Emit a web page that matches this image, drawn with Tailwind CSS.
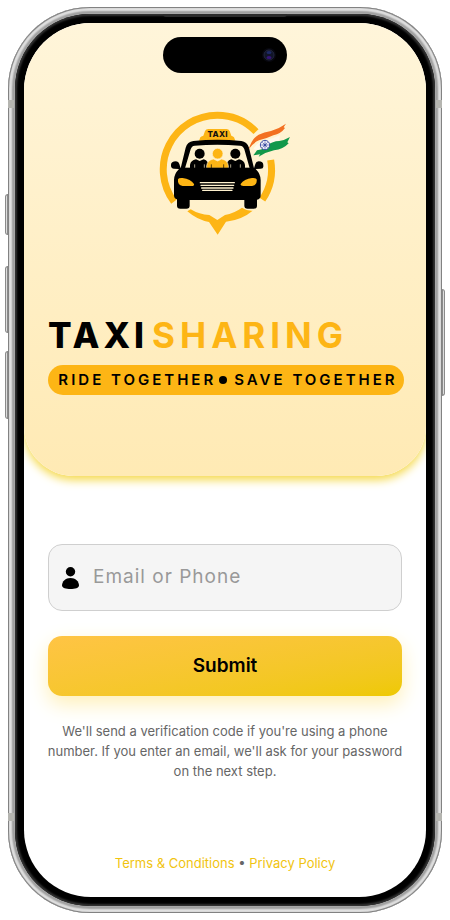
<!doctype html>
<html lang="en">
<head>
  <meta charset="UTF-8">
  <meta name="viewport" content="width=device-width, initial-scale=1.0">
  <title>Taxi Sharing</title>
  <script src="https://cdn.jsdelivr.net/npm/@tailwindcss/browser@4"></script>
</head>
<body class="bg-white font-['Inter',sans-serif]">
  <div class="min-h-screen flex px-2 py-[7px]">

    <!-- Phone frame -->
    <div class="relative flex flex-1 rounded-[82px] bg-[#a9a9a9] p-[7px] shadow-[inset_0_0_1px_1px_#777,inset_0_0_2px_4px_#e4e4e4,inset_0_0_1px_6px_#999]">
      <span class="absolute -left-[3px] top-[187px] h-[41px] w-[3px] rounded-l-sm border border-[#8a8a8a] bg-[#ddd]"></span>
      <span class="absolute -left-[3px] top-[259px] h-[67px] w-[3px] rounded-l-sm border border-[#8a8a8a] bg-[#ddd]"></span>
      <span class="absolute -left-[3px] top-[344px] h-[68px] w-[3px] rounded-l-sm border border-[#8a8a8a] bg-[#ddd]"></span>
      <span class="absolute -right-[3px] top-[282px] h-[107px] w-[3px] rounded-r-sm border border-[#8a8a8a] bg-[#ddd]"></span>
      <span class="absolute left-0 top-[93px] h-2 w-[6px] bg-[#b5b5b0]"></span>
      <span class="absolute right-0 top-[93px] h-2 w-[6px] bg-[#b5b5b0]"></span>
      <span class="absolute left-0 bottom-[92px] h-2 w-[6px] bg-[#b5b5b0]"></span>
      <span class="absolute right-0 bottom-[92px] h-2 w-[6px] bg-[#b5b5b0]"></span>

      <div class="relative flex flex-1 rounded-[75px] bg-black p-[9px] shadow-[inset_0_0_2px_2px_#333]">
        <span class="absolute left-1/2 top-0 h-[3px] w-[124px] -translate-x-1/2 rounded-b-sm bg-[#2b2b2b]"></span>

        <main class="flex flex-1 flex-col overflow-hidden rounded-[67px] bg-white">
          <!-- Hero -->
          <section class="flex flex-col rounded-b-[50px] bg-linear-to-b from-[#fff5da] to-[#ffeab4] px-6 pt-[14px] pb-[81px] shadow-[0_4px_10px_#f5d94a]">
            <div class="flex h-9 w-[124px] items-center justify-end self-center rounded-full bg-black pr-[11px]">
              <svg class="h-[14px] w-[14px]" viewBox="0 0 14 14">
                <circle cx="7" cy="7" r="7" fill="#07070f" />
                <circle cx="7" cy="7" r="5" fill="#111528" stroke="#22263d" />
                <ellipse cx="7" cy="4.500" rx="2.500" ry="1.500" fill="#1d2a66" />
                <ellipse cx="7" cy="9.500" rx="2.500" ry="1.500" fill="#35147a" />
              </svg>
            </div>

            <svg class="mt-[27px] h-[145px] w-[150px] self-center" viewBox="0 0 450 435" role="img" aria-label="Taxi Sharing logo">
              <!-- map pin ring -->
              <g fill="none" stroke="#fdb515" stroke-width="21">
                <path d="M72 305A162 162 0 0 1 202 46A162 162 0 0 1 318 95" />
                <path d="M362 180A162 162 0 0 1 337 299" />
              </g>
              <path fill="#fdb515" d="M122 328Q148 344 178 345L202 360L225 345Q252 340 276 323Q290 333 308 332Q275 360 228 365L203 404L177 366Q142 360 112 334Z" />
              <!-- roof sign -->
              <path fill="#fdb515" d="M147 122L151 112Q153 109 160 107L165 93Q168 87 175 87H229Q236 87 239 93L244 107Q250 109 252 112L256 122Z" />
              <text x="203" y="112" text-anchor="middle" font-family="Inter, sans-serif" font-size="24" font-weight="800" letter-spacing="1" fill="#111">TAXI</text>
              <!-- car body -->
              <path fill="#000" fill-rule="evenodd" d="M92 205L107 143Q112 125 130 123Q202 116 274 123Q291 125 297 143L312 205L316 192Q318 184 326 184Q340 185 340 195V200Q340 206 332 206L317 207Q332 222 332 240V287Q332 296 321 299V317Q321 326 311 326H293Q283 326 283 317V300H119V317Q119 326 109 326H91Q81 326 81 317V298Q72 296 72 286V240Q72 222 87 207L72 206Q63 205 63 197V194Q63 185 78 184Q86 184 88 192ZM122 148L105 205H299L283 148Q280 138 270 137Q202 132 134 137Q125 138 122 148Z" />
              <!-- passengers -->
              <g fill="#000">
                <circle cx="149" cy="161" r="15" />
                <path d="M120 205V195Q122 181 138 178L149 183L161 178Q177 182 177 205Z" />
                <circle cx="256" cy="161" r="15" />
                <path d="M228 205Q228 182 244 178L256 183L267 178Q283 181 285 195V205Z" />
              </g>
              <g fill="#fdb515" stroke="#fff2cf" stroke-width="2">
                <path d="M170 205V197Q172 181 190 177L203 183L215 177Q233 181 235 197V205Z" />
                <circle cx="203" cy="161" r="16" />
              </g>
              <path stroke="#fff2cf" stroke-width="2" d="M134 193V204M163 193V204M242 193V204M271 193V204" />
              <path stroke="#000" stroke-width="2" d="M184 193V204M221 193V204" />
              <rect x="104" y="203" width="197" height="8" fill="#000" />
              <!-- headlights and grille -->
              <path fill="#fdb515" d="M84 238Q86 233 98 234Q122 237 132 252Q134 258 124 258H98Q82 256 84 238Z" />
              <path fill="#fdb515" d="M320 238Q318 233 306 234Q282 237 272 252Q270 258 280 258H306Q322 256 320 238Z" />
              <path fill="none" stroke="#fff2cf" stroke-width="4" stroke-linecap="round" d="M151 248H253M153 256H251M155 264H249M158 271H246" />
              <!-- tricolour flag -->
              <path fill="#f37022" d="M296 148Q306 115 326 104Q342 96 363 93Q387 86 408 71L401 82L405 84Q393 101 370 106Q347 117 327 121Q307 130 296 148Z" />
              <path fill="#fff8ec" d="M310 148Q323 124 344 121Q370 116 390 105L388 121Q366 125 351 144L328 151Z" />
              <path fill="#12984a" d="M310 166L321 151Q346 148 355 135Q366 124 388 123Q405 120 420 111L412 127L416 130Q400 148 372 151Q346 157 326 170L330 163Z" />
              <circle cx="345" cy="135" r="14" fill="#f3f0fa" stroke="#3c4da0" stroke-width="3" />
              <path stroke="#3c4da0" stroke-width="2" d="M345 124V146M334 135H356M337 127L353 143M353 127L337 143" />
              <circle cx="345" cy="135" r="4" fill="#3c4da0" />
            </svg>

            <h1 class="mt-[70px] flex gap-1 whitespace-nowrap text-[35px] leading-10 font-bold text-black">
              <span class="font-extrabold tracking-[4px]">TAXI</span>
              <span class="tracking-[5px] text-[#fdb515]">SHARING</span>
            </h1>
            <p class="mt-[10px] -mr-[2px] flex h-[30px] items-center justify-center gap-[3px] whitespace-nowrap rounded-full bg-[#fdb515] pl-1 text-[15px] font-semibold tracking-[3px] text-black">
              <span>RIDE TOGETHER</span>
              <span class="mr-1 h-2 w-2 rounded-full bg-black"></span>
              <span>SAVE TOGETHER</span>
            </p>
          </section>

          <!-- Login form -->
          <form class="flex flex-col px-6 pt-[68px]">
            <label for="login" class="flex h-[67px] items-center rounded-[14px] border border-[#cfcfcf] bg-[#f5f5f5] pl-[13px] pr-4">
              <svg class="h-[22px] w-[17px] shrink-0" viewBox="0 0 17 22" aria-hidden="true">
                <circle cx="8.500" cy="4.700" r="4.700" />
                <path d="M0 18.500C0 14.500 3.500 11 8.500 11S17 14.500 17 18.500C17 21 13 22 8.500 22S0 21 0 18.500Z" />
              </svg>
              <input id="login" type="text" aria-label="Email or Phone" placeholder="Email or Phone" class="ml-[14px] w-full min-w-0 bg-transparent text-[19px] tracking-[1px] text-black placeholder-[#999] focus:outline-none">
            </label>
            <button type="submit" class="mt-[25px] h-[60px] rounded-[14px] bg-linear-to-br from-[#ffc444] to-[#eec900] text-[19px] font-semibold text-black shadow-[0_8px_20px_#fff0b8]">Submit</button>
            <p class="-mx-2 mt-[25px] text-center text-[13px] leading-5 text-[#666]">We'll send a verification code if you're using a phone number. If you enter an email, we'll ask for your password on the next step.</p>
          </form>

          <footer class="mt-auto pb-6 text-center text-[13px] leading-5 text-[#666]">
            <a href="#" class="text-[#f1c40f]">Terms &amp; Conditions</a>
            •
            <a href="#" class="text-[#f1c40f]">Privacy Policy</a>
          </footer>
        </main>
      </div>
    </div>
  </div>
</body>
</html>
